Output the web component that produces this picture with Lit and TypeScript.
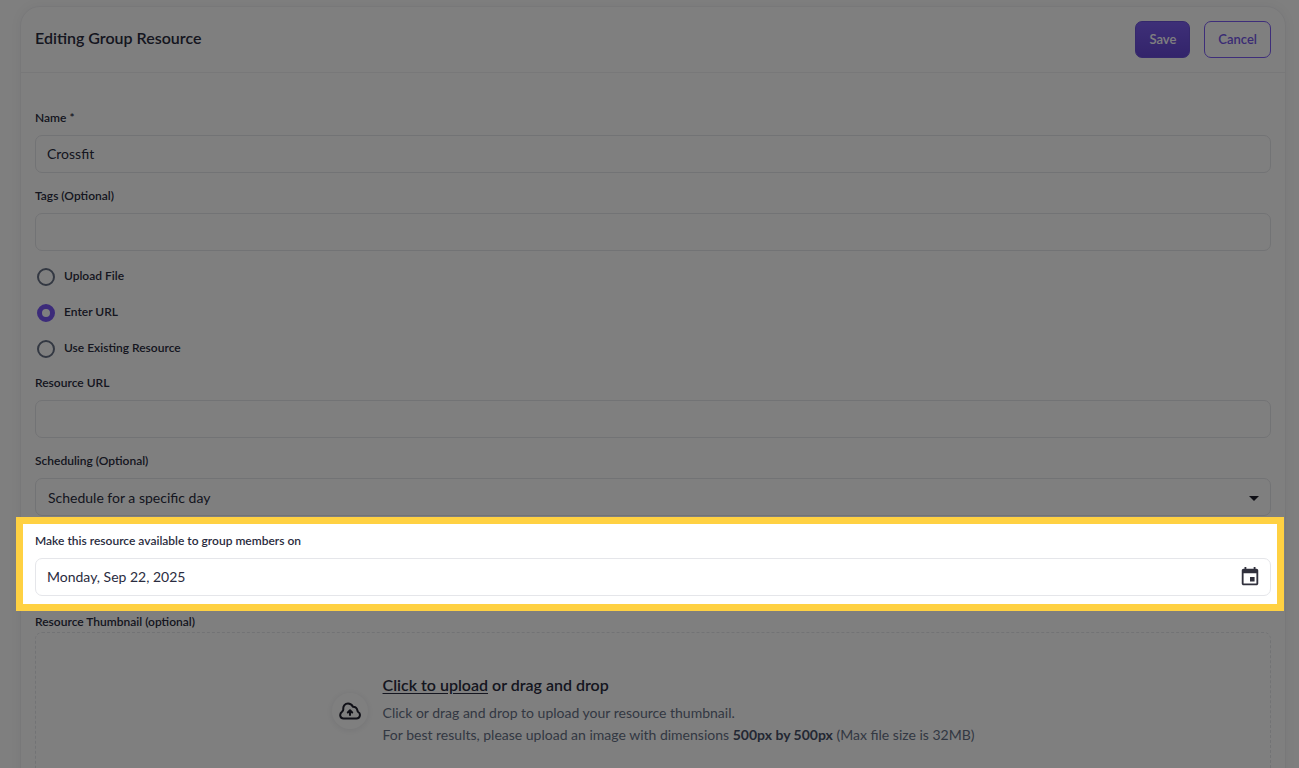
import { LitElement, html, css } from "lit";
import { customElement, state } from "lit/decorators.js";

@customElement("app-root")
export class AppRoot extends LitElement {
  static styles = css`
    :host {
      display: block;
      height: 100vh;
      overflow: hidden;
      box-sizing: border-box;
      padding: 6px 13px 0 20px;
      background: #fefefe;
      color: #2a2c40;
      font-family: Lato, "Open Sans", sans-serif;
      font-size: 14px;
    }
    * {
      box-sizing: border-box;
    }
    button,
    input,
    select {
      font: inherit;
      color: inherit;
    }
    .card {
      border: 1px solid #f1f1f3;
      border-radius: 20px;
      background: #fff;
      box-shadow: 0 0 12px rgba(30, 30, 60, 0.05);
    }
    .header {
      display: flex;
      align-items: flex-start;
      justify-content: space-between;
      padding: 14px;
      border-bottom: 1px solid #f1f1f3;
    }
    .title {
      margin: 0;
      font-size: 16px;
      line-height: 34px;
      font-weight: 600;
    }
    .actions {
      display: flex;
      gap: 14px;
    }
    .btn {
      height: 37px;
      padding: 0 13px 2px;
      border: 1px solid #7c5cf5;
      border-radius: 7px;
      background: #fff;
      color: #7557e8;
      font-size: 13px;
      font-weight: 600;
    }
    .primary {
      border-color: #6a50d8;
      background: linear-gradient(#7c5ff0, #6648d6);
      color: #fff;
    }
    .form {
      display: flex;
      flex-direction: column;
      gap: 15px;
      padding: 37px 14px 14px;
    }
    .field {
      display: flex;
      flex-direction: column;
      gap: 9px;
    }
    .label {
      font-size: 12px;
      line-height: 16px;
      font-weight: 600;
    }
    .control {
      width: 100%;
      height: 38px;
      padding: 0 11px 2px;
      border: 1px solid #e5e6ea;
      border-radius: 7px;
      background: #fff;
      outline: none;
    }
    .wrap {
      position: relative;
      display: flex;
    }
    .select {
      appearance: none;
      padding: 0 12px;
    }
    .arrow {
      position: absolute;
      right: 12px;
      top: 18px;
      pointer-events: none;
    }
    .picker {
      position: absolute;
      right: 10px;
      top: 8px;
      display: flex;
      padding: 0;
      border: 0;
      background: none;
    }
    .radios {
      display: flex;
      flex-direction: column;
      gap: 14px;
      margin: 0;
      padding: 0 0 0 2px;
      border: 0;
    }
    .radio {
      display: flex;
      align-items: center;
      gap: 9px;
      height: 22px;
      font-size: 12px;
      line-height: 16px;
      font-weight: 600;
    }
    .radio span {
      padding-bottom: 2px;
    }
    .radio input {
      appearance: none;
      width: 18px;
      height: 18px;
      margin: 0;
      border: 2px solid #667085;
      border-radius: 50%;
      background: #fff;
    }
    .radio input:checked {
      border: 5px solid #7857f5;
    }
    .spotlight {
      position: relative;
      z-index: 1;
      margin: -14px -13px -12px -19px;
      padding: 9px 6px 8px 12px;
      border: 7px solid #ffd142;
      background: #fff;
      box-shadow: 0 0 0 200vmax rgba(0, 0, 0, 0.5);
    }
    .upload {
      gap: 2px;
    }
    .dropzone {
      display: flex;
      align-items: center;
      justify-content: center;
      gap: 15px;
      padding: 40px 14px;
      border: 1px dashed #e5e6ea;
      border-radius: 7px;
    }
    .badge {
      display: flex;
      align-items: center;
      justify-content: center;
      width: 36px;
      height: 36px;
      border-radius: 50%;
      background: #fff;
      box-shadow: 0 1px 7px rgba(30, 30, 60, 0.1);
    }
    .copy {
      display: flex;
      flex-direction: column;
      gap: 5px;
      padding-bottom: 2px;
    }
    .lead {
      margin: 0;
      font-size: 16px;
      line-height: 24px;
      font-weight: 600;
    }
    .lead a {
      color: inherit;
      text-underline-offset: 2px;
    }
    .hint {
      margin: 0;
      line-height: 22px;
      color: #667085;
    }
    .hint b {
      color: #475067;
    }
  `;

  @state() private source = "Enter URL";

  private textField(id: string, label: string, value = "") {
    return html`<div class="field">
      <label class="label" for=${id}>${label}</label>
      <input class="control" id=${id} type="text" .value=${value} />
    </div>`;
  }

  private radio(label: string) {
    return html`<label class="radio">
      <input type="radio" name="source" .checked=${this.source === label}
        @change=${() => (this.source = label)} />
      <span>${label}</span>
    </label>`;
  }

  render() {
    return html`
      <main class="card">
        <header class="header">
          <h1 class="title">Editing Group Resource</h1>
          <div class="actions">
            <button class="btn primary" type="submit" form="resource">Save</button>
            <button class="btn" type="button">Cancel</button>
          </div>
        </header>
        <form class="form" id="resource" @submit=${(e: Event) => e.preventDefault()}>
          ${this.textField("name", "Name *", "Crossfit")}
          ${this.textField("tags", "Tags (Optional)")}
          <fieldset class="radios" aria-label="Resource source">
            ${["Upload File", "Enter URL", "Use Existing Resource"].map((l) => this.radio(l))}
          </fieldset>
          ${this.textField("url", "Resource URL")}
          <div class="field">
            <label class="label" for="schedule">Scheduling (Optional)</label>
            <div class="wrap">
              <select class="control select" id="schedule">
                <option>Schedule for a specific day</option>
              </select>
              <svg class="arrow" width="10" height="5" viewBox="0 0 10 5" aria-hidden="true">
                <path d="M0 0h10L5 5z" fill="#1f1f2b" />
              </svg>
            </div>
          </div>
          <section class="spotlight">
            <div class="field">
              <label class="label" for="date">Make this resource available to group members on</label>
              <div class="wrap">
                <input class="control" id="date" type="text" .value=${"Monday, Sep 22, 2025"} />
                <button class="picker" type="button" aria-label="Choose date">
                  <svg width="22" height="22" viewBox="0 0 24 24" fill="#30303c">
                    <path d="M17 12h-5v5h5v-5zM16 1v2H8V1H6v2H5c-1.11 0-1.99.9-1.99 2L3 19c0 1.1.89 2 2 2h14c1.1 0 2-.9 2-2V5c0-1.1-.9-2-2-2h-1V1h-2zm3 18H5V8h14v11z" />
                  </svg>
                </button>
              </div>
            </div>
          </section>
          <div class="field upload">
            <span class="label">Resource Thumbnail (optional)</span>
            <div class="dropzone">
              <span class="badge">
                <svg width="22" height="18" viewBox="0 0 22 18" fill="none" stroke="#20202e" stroke-width="2" stroke-linecap="round" stroke-linejoin="round" aria-hidden="true">
                  <path d="M4.500 16.500H17.500A3.500 3.500 0 0 0 19.200 10C18.800 9.700 18.600 9.300 18.500 8.800C18 6 16.500 4.700 14 4.700C12.800 2.500 11 1.500 9 1.500C6 1.500 4 4 4.300 7C4.400 8.200 3.800 9 3 9.700C0 12 1 16.500 4.500 16.500z" />
                  <path d="M11 13V8.500M8.800 10.500 11 8.300l2.200 2.200" />
                </svg>
              </span>
              <div class="copy">
                <p class="lead"><a href="#">Click to upload</a> or drag and drop</p>
                <p class="hint">
                  Click or drag and drop to upload your resource thumbnail.<br />
                  For best results, please upload an image with dimensions <b>500px by 500px</b> (Max file size is 32MB)
                </p>
              </div>
            </div>
          </div>
        </form>
      </main>
    `;
  }
}
